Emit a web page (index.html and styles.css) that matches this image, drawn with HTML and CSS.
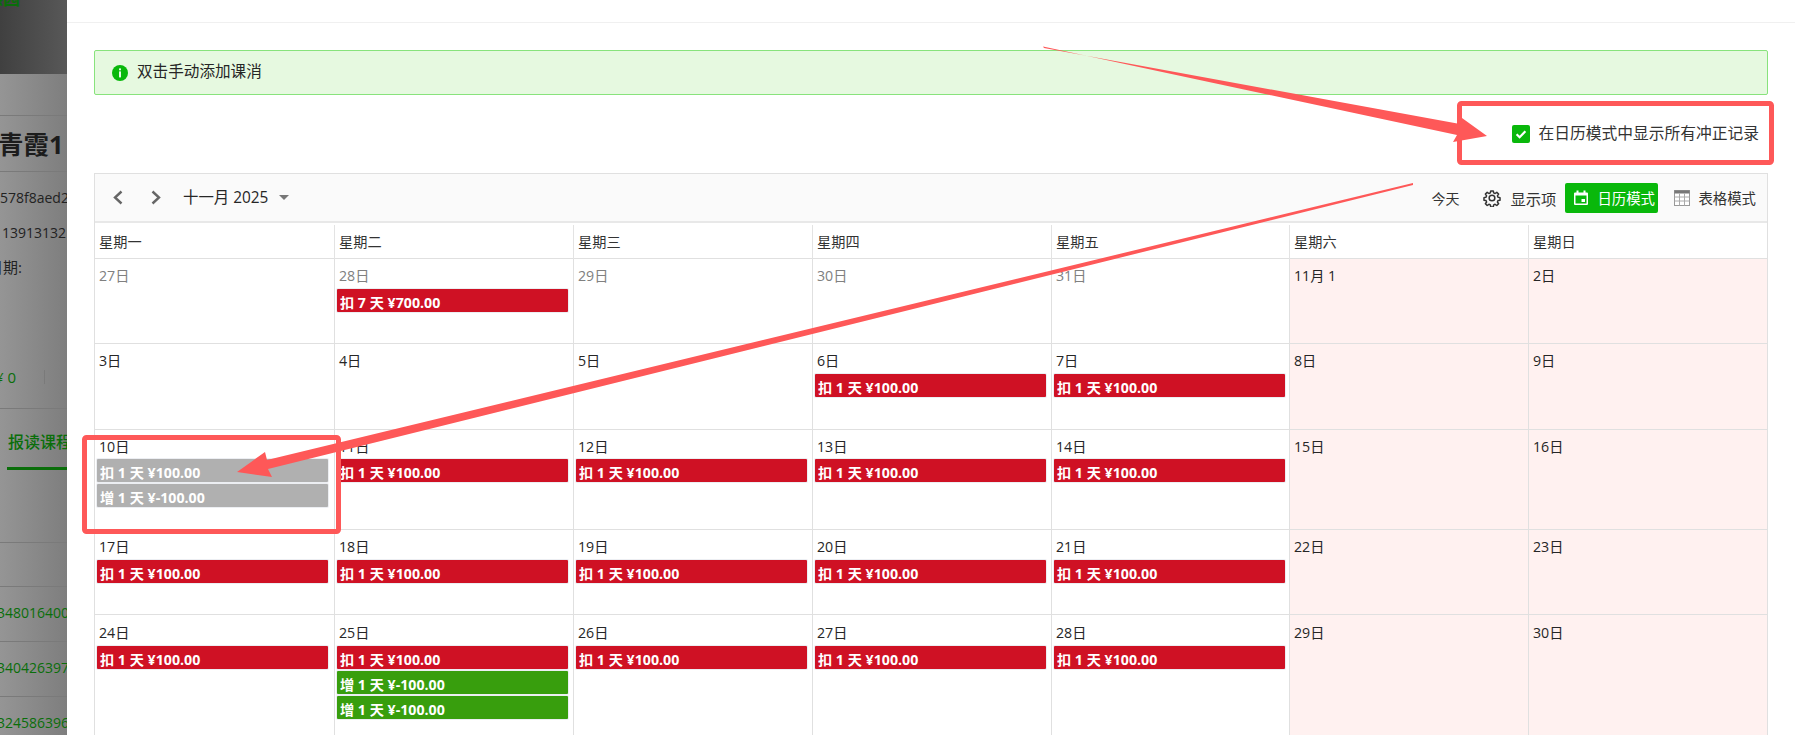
FILE: index.html
```html
<!DOCTYPE html>
<html lang="zh">
<head>
<meta charset="utf-8">
<title>日历模式</title>
<link rel="stylesheet" href="styles.css">
</head>
<body>
<div class="app">
  <aside class="backdrop">
    <div class="bd-top"><span class="bd-logo">感园</span></div>
    <div class="bd-gap"></div>
    <div class="bd-name">青霞1</div>
    <div class="bd-lines">
      <div class="bd-line">578f8aed2</div>
      <div class="bd-line bd-phone">13913132</div>
      <div class="bd-line bd-date">日期:</div>
    </div>
    <div class="bd-amount"><span>¥ 0</span><i class="bd-sep"></i></div>
    <div class="bd-tab"><span>报读课程</span></div>
    <div class="bd-spacer"></div>
    <div class="bd-spacer2"></div>
    <div class="bd-row">348016400</div>
    <div class="bd-row">340426397</div>
    <div class="bd-row">324586396</div>
  </aside>
  <main class="drawer">
    <div class="drawer-head"></div>
    <div class="drawer-body">
      <div class="alert">
        <svg class="alert-icon" viewBox="0 0 16 16"><circle cx="8" cy="8" r="8" fill="#09b80b"/><rect x="7.1" y="3.4" width="1.8" height="1.9" fill="#fff"/><rect x="7.1" y="6.4" width="1.8" height="6" fill="#fff"/></svg>
        <span class="alert-text">双击手动添加课消</span>
      </div>
      <div class="option-row">
        <span class="checkbox"><svg viewBox="0 0 18 18"><path d="M4.6 9.2l3 3 5.8-6" fill="none" stroke="#fff" stroke-width="2.2"/></svg></span>
        <span class="option-text">在日历模式中显示所有冲正记录</span>
      </div>
      <section class="calendar">
        <div class="toolbar">
          <div class="tb-left">
            <svg class="chev" viewBox="0 0 10 15"><path d="M8.500 1.500L2 7.500l6.500 6" fill="none" stroke="#666" stroke-width="2.400"/></svg>
            <svg class="chev chev-next" viewBox="0 0 10 15"><path d="M1.500 1.500L8 7.500l-6.500 6" fill="none" stroke="#666" stroke-width="2.400"/></svg>
            <span class="month">十一月 2025</span>
            <span class="caret"></span>
          </div>
          <div class="tb-right">
            <span class="tb-today">今天</span>
            <span class="tb-item tb-columns">
              <svg class="tb-icon" viewBox="0 0 24 24"><path d="M10.300 2.500h3.400l.5 2.700 1.900.8 2.300-1.600 2.400 2.400-1.600 2.300.8 1.900 2.700.5v3.400l-2.700.5-.8 1.900 1.600 2.300-2.400 2.400-2.300-1.600-1.900.8-.5 2.700h-3.400l-.5-2.700-1.900-.8-2.300 1.600-2.400-2.400 1.600-2.300-.8-1.900-2.700-.5v-3.400l2.700-.5.8-1.900-1.600-2.300 2.400-2.400 2.300 1.600 1.900-.8z" fill="none" stroke="#333" stroke-width="2" stroke-linejoin="round"/><circle cx="12" cy="12" r="3.800" fill="none" stroke="#333" stroke-width="2"/></svg>
              <span class="tb-columns-label">显示项</span>
            </span>
            <span class="tb-item tb-active">
              <svg class="tb-icon" viewBox="0 0 16 16"><path d="M1 3.500a1 1 0 0 1 1-1h12a1 1 0 0 1 1 1V14a1 1 0 0 1-1 1H2a1 1 0 0 1-1-1z" fill="#fff"/><rect x="3.500" y="0.500" width="2" height="3" fill="#fff"/><rect x="10.500" y="0.500" width="2" height="3" fill="#fff"/><rect x="2.500" y="5.500" width="11" height="8" fill="#09b80b"/><rect x="8.500" y="9" width="3.500" height="3" fill="#fff"/></svg>
              日历模式
            </span>
            <span class="tb-item tb-table">
              <svg class="tb-icon" viewBox="0 0 16 16"><rect x="0.500" y="0.500" width="15" height="15" fill="#fff" stroke="#999"/><rect x="0.500" y="0.500" width="15" height="3" fill="#777"/><path d="M0.500 7h15M0.500 11h15M5.500 3.500v12M10.500 3.500v12" stroke="#aaa" fill="none"/></svg>
              表格模式
            </span>
          </div>
        </div>
        <div class="grid week-head">
          <div>星期一</div><div>星期二</div><div>星期三</div><div>星期四</div><div>星期五</div><div>星期六</div><div>星期日</div>
        </div>
        <div class="grid week w1">
          <div class="day muted"><span class="num">27日</span></div>
          <div class="day muted"><span class="num">28日</span><span class="ev red">扣 7 天 ¥700.00</span></div>
          <div class="day muted"><span class="num">29日</span></div>
          <div class="day muted"><span class="num">30日</span></div>
          <div class="day muted"><span class="num">31日</span></div>
          <div class="day off"><span class="num">11月 1</span></div>
          <div class="day off"><span class="num">2日</span></div>
        </div>
        <div class="grid week w2">
          <div class="day"><span class="num">3日</span></div>
          <div class="day"><span class="num">4日</span></div>
          <div class="day"><span class="num">5日</span></div>
          <div class="day"><span class="num">6日</span><span class="ev red">扣 1 天 ¥100.00</span></div>
          <div class="day"><span class="num">7日</span><span class="ev red">扣 1 天 ¥100.00</span></div>
          <div class="day off"><span class="num">8日</span></div>
          <div class="day off"><span class="num">9日</span></div>
        </div>
        <div class="grid week w3">
          <div class="day"><span class="num">10日</span><span class="ev gray">扣 1 天 ¥100.00</span><span class="ev gray">增 1 天 ¥-100.00</span></div>
          <div class="day"><span class="num">11日</span><span class="ev red">扣 1 天 ¥100.00</span></div>
          <div class="day"><span class="num">12日</span><span class="ev red">扣 1 天 ¥100.00</span></div>
          <div class="day"><span class="num">13日</span><span class="ev red">扣 1 天 ¥100.00</span></div>
          <div class="day"><span class="num">14日</span><span class="ev red">扣 1 天 ¥100.00</span></div>
          <div class="day off"><span class="num">15日</span></div>
          <div class="day off"><span class="num">16日</span></div>
        </div>
        <div class="grid week w4">
          <div class="day"><span class="num">17日</span><span class="ev red">扣 1 天 ¥100.00</span></div>
          <div class="day"><span class="num">18日</span><span class="ev red">扣 1 天 ¥100.00</span></div>
          <div class="day"><span class="num">19日</span><span class="ev red">扣 1 天 ¥100.00</span></div>
          <div class="day"><span class="num">20日</span><span class="ev red">扣 1 天 ¥100.00</span></div>
          <div class="day"><span class="num">21日</span><span class="ev red">扣 1 天 ¥100.00</span></div>
          <div class="day off"><span class="num">22日</span></div>
          <div class="day off"><span class="num">23日</span></div>
        </div>
        <div class="grid week w5">
          <div class="day"><span class="num">24日</span><span class="ev red">扣 1 天 ¥100.00</span></div>
          <div class="day"><span class="num">25日</span><span class="ev red">扣 1 天 ¥100.00</span><span class="ev green">增 1 天 ¥-100.00</span><span class="ev green">增 1 天 ¥-100.00</span></div>
          <div class="day"><span class="num">26日</span><span class="ev red">扣 1 天 ¥100.00</span></div>
          <div class="day"><span class="num">27日</span><span class="ev red">扣 1 天 ¥100.00</span></div>
          <div class="day"><span class="num">28日</span><span class="ev red">扣 1 天 ¥100.00</span></div>
          <div class="day off"><span class="num">29日</span></div>
          <div class="day off"><span class="num">30日</span></div>
        </div>
      </section>
    </div>
  </main>
  <svg class="annotations" viewBox="0 0 1795 735">
    <rect x="1459.500" y="103.500" width="312" height="59" rx="2" fill="none" stroke="#fe5858" stroke-width="5"/>
    <rect x="84.500" y="437.500" width="254" height="94" rx="2" fill="none" stroke="#fe5858" stroke-width="5"/>
    <polygon points="1043,46.500 1044,48 1460,124 1462,118 1487,136 1453,142 1457,135" fill="#fe5858"/>
    <polygon points="1413,183 1413,185 268,469 272,477 237,472 265,452 267,460" fill="#fe5858"/>
  </svg>
</div>
</body>
</html>
```
FILE: styles.css
```css
* { box-sizing: border-box; }
html, body { margin: 0; height: 100%; overflow: hidden; }
body { font-family: "Open Sans", "Noto Sans CJK SC", sans-serif; font-size: 14px; color: #262626; background: #fff; }
.app { display: flex; height: 735px; width: 1795px; overflow: hidden; position: relative; }

.backdrop { width: 67px; flex: none; background: linear-gradient(90deg, #959595, #7e7e7e); overflow: hidden; white-space: nowrap; }
.bd-top { height: 74px; background: linear-gradient(90deg, #404040, #585858); overflow: hidden; }
.bd-logo { display: block; margin-top: -9px; margin-left: -14px; font-size: 17px; line-height: 16px; font-weight: 700; color: #0a6e0a; }
.bd-gap { height: 42px; border-bottom: 1px solid #7a7a7a; }
.bd-name { height: 56px; margin-left: -2px; border-bottom: 1px solid #7a7a7a; font-size: 25.500px; line-height: 56px; font-weight: 700; color: #1c1c1c; }
.bd-lines { padding-top: 8px; }
.bd-line { height: 35px; line-height: 35px; font-size: 14px; color: #222; }
.bd-phone { padding-left: 2px; }
.bd-date { margin-left: -12px; font-size: 15px; }
.bd-amount { height: 124px; padding-top: 82px; line-height: 20px; color: #0a6e0a; font-size: 15px; border-bottom: 1px solid #7a7a7a; margin-left: -5px; display: flex; align-items: flex-start; }
.bd-sep { display: block; width: 1px; height: 14px; margin: 3px 0 0 28px; background: #7a7a7a; }
.bd-tab { height: 61px; padding: 21px 0 0 7px; color: #0a6e0a; font-size: 16px; font-weight: 500; }
.bd-tab span { display: block; height: 40px; padding-left: 1px; line-height: 24px; border-bottom: 3px solid #0a6e0a; }
.bd-spacer { height: 73px; border-bottom: 1px solid #7a7a7a; }
.bd-spacer2 { height: 44px; border-bottom: 1px solid #7a7a7a; }
.bd-row { height: 55px; line-height: 52px; border-bottom: 1px solid #7a7a7a; color: #0a6e0a; font-size: 14px; margin-left: -3px; }

.drawer { flex: 1; min-width: 0; background: #fff; }
.drawer-head { height: 23px; border-bottom: 1px solid #f0f0f0; }
.drawer-body { padding: 27px 27px 0 27px; }

.alert { height: 45px; display: flex; align-items: center; gap: 9px; padding-left: 17px; background: #e6f9e0; border: 1px solid #88e37c; border-radius: 2px; }
.alert-icon { width: 16px; height: 16px; flex: none; }
.alert-text { font-size: 15.600px; line-height: 20px; margin-top: -3px; }

.option-row { height: 78px; padding-right: 9px; display: flex; align-items: center; justify-content: flex-end; gap: 9px; color: #333; }
.option-text { font-size: 15.750px; line-height: 20px; margin-top: -2px; }
.checkbox { width: 18px; height: 18px; border-radius: 2px; background: #09b80b; display: block; }
.checkbox svg { display: block; width: 18px; height: 18px; }

.calendar { border: 1px solid #e0e0e0; border-bottom: 0; }
.toolbar { height: 49px; background: #fafafa; border-bottom: 2px solid #e8e8e8; display: flex; align-items: center; justify-content: space-between; padding: 0 11px 0 18px; }
.tb-left { display: flex; align-items: center; }
.chev { width: 10px; height: 15px; margin-right: 28px; }
.chev-next { margin-right: 22px; }
.month { font-size: 15.400px; line-height: 20px; margin-right: 11px; }
.caret { width: 0; height: 0; border: 5px solid transparent; border-top: 5px solid #777; border-bottom: 0; }
.tb-right { display: flex; align-items: center; height: 30px; }
.tb-today { margin-right: 24px; color: #333; font-size: 14px; }
.tb-item { display: flex; align-items: center; font-size: 14.400px; height: 30px; color: #333; }
.tb-icon { width: 16px; height: 16px; margin-right: 8px; flex: none; }
.tb-columns { margin-right: 9px; }
.tb-columns .tb-icon { width: 18px; height: 18px; margin-left: -1px; margin-right: 10px; }
.tb-columns-label { font-size: 15.300px; }
.tb-active { background: #09b80b; color: #fff; border-radius: 2px; padding-left: 8px; width: 93px; margin-right: 16px; white-space: nowrap; }

.grid { display: grid; grid-template-columns: 239px 239px 239px 239px 238px 239px 239px; }
.week-head { height: 36px; padding-top: 2px; border-bottom: 1px solid #e0e0e0; }
.week-head > div { padding-left: 4px; line-height: 34px; border-left: 1px solid #e3e3e3; color: #333; font-size: 14.200px; }
.week-head > div:first-child { border-left: 0; }

.week { border-bottom: 1px solid #e0e0e0; }
.w1 { height: 85px; }
.w2 { height: 86px; }
.w3 { height: 100px; }
.w4 { height: 85px; }
.w5 { height: 130px; }

.day { border-left: 1px solid #e0e0e0; padding: 4px 5px 0 2px; display: flex; flex-direction: column; align-items: stretch; min-width: 0; }
.day:first-child { border-left: 0; padding-right: 6px; }
.day:nth-child(5) { padding-right: 4px; }
.day.off { background: #fff1f0; }
.w5 .day { padding-top: 5px; }
.num { display: block; height: 26px; line-height: 26px; padding-left: 2px; font-size: 14.200px; color: #262626; }
.w3 .num { height: 25px; }
.muted .num { color: #808080; }
.ev { display: block; height: 23px; margin-bottom: 2px; padding-left: 3px; line-height: 27px; border-radius: 1px; box-shadow: 0 0 0 1px #eceef2; color: #fff; font-size: 14.200px; font-weight: 700; white-space: nowrap; overflow: hidden; }
.ev.red { background: #cf1124; }
.ev.green { background: #389e0d; }
.ev.gray { background: #b0b0b0; }

.annotations { position: absolute; left: 0; top: 0; width: 1795px; height: 735px; pointer-events: none; }
```
